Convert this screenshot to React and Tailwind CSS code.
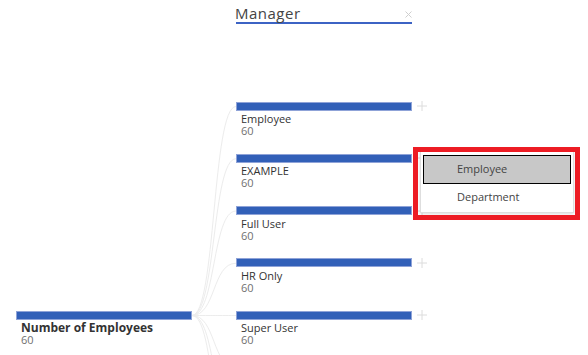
import React from "react";

const rows = [
  { label: "Employee" },
  { label: "EXAMPLE" },
  { label: "Full User" },
  { label: "HR Only" },
  { label: "Super User" },
];

const childYs = [102, 154.25, 206.5, 258.75, 311, 363.25, 415.5, 467.75];

function Bar() {
  return <div className="h-[9px] w-[176px] shrink-0 bg-[#3260b8] border border-[#8fa3d8]" />;
}

function Plus() {
  return (
    <svg width="10" height="10" viewBox="0 0 10 10" className="shrink-0">
      <line x1="0" y1="5" x2="10" y2="5" stroke="#dcdcdc" strokeWidth="1" />
      <line x1="5" y1="0" x2="5" y2="10" stroke="#dcdcdc" strokeWidth="1" />
    </svg>
  );
}

function Node({ label, bold }) {
  return (
    <div className="flex flex-col">
      <div className="flex items-center gap-[5px]">
        <Bar />
        {!bold && <Plus />}
      </div>
      <div className="mt-[2px] pl-[5px] leading-[12px]">
        <div className={bold ? "text-[12px] font-bold text-[#333]" : "text-[11px] text-[#333]"}>{label}</div>
        <div className="text-[11px] text-[#707070]">60</div>
      </div>
    </div>
  );
}

export default function App() {
  const sx = 192;
  const sy = 315.5;
  const ex = 236;
  return (
    <div
      className="relative w-[588px] h-[355px] overflow-hidden bg-white"
      style={{ fontFamily: '"Open Sans", "Noto Sans", sans-serif' }}
    >
      <svg className="absolute left-0 top-0" width="588" height="355">
        {childYs.map((y, i) => {
          const ty = y + 4.5;
          return (
            <path
              key={i}
              d={`M ${sx} ${sy} C ${sx + 24} ${sy}, ${ex - 24} ${ty}, ${ex} ${ty}`}
              fill="none"
              stroke="#ececec"
              strokeWidth="1"
            />
          );
        })}
      </svg>

      <div className="relative flex items-start pl-[16px]">
        {/* root column */}
        <div className="pt-[311px] w-[220px] shrink-0">
          <Node label="Number of Employees" bold />
        </div>

        {/* child column */}
        <div className="flex flex-col pt-[3px] -ml-[1px]">
          <div className="relative w-[177px]">
            <div className="h-[20px] text-[15px] leading-[20px] tracking-[0.5px] text-[#444]">Manager</div>
            <div className="h-[2px] bg-[#3c63c4] mt-[-1px] ml-[1px]" />
            <svg className="absolute left-[170px] top-[8px]" width="7" height="7" viewBox="0 0 7 7">
              <line x1="0.5" y1="0.5" x2="6.5" y2="6.5" stroke="#cfcfcf" strokeWidth="1" />
              <line x1="6.5" y1="0.5" x2="0.5" y2="6.5" stroke="#cfcfcf" strokeWidth="1" />
            </svg>
          </div>
          <div className="flex flex-col pt-[77px] pl-[1px]">
            {rows.map((r) => (
              <div key={r.label} className="h-[52.25px]">
                <Node label={r.label} />
              </div>
            ))}
          </div>
        </div>
      </div>

      {/* dropdown menu */}
      <div className="absolute left-[420px] top-[150px] w-[154px] h-[63px] bg-white border border-[#dedede] shadow-[0_1px_3px_rgba(0,0,0,0.15)] pt-[4px] px-[2px] text-[11px] text-[#444]">
        <div className="h-[29px] flex items-center pl-[33px] bg-[#c8c8c8] border border-black">Employee</div>
        <div className="h-[27px] flex items-center pl-[34px]">Department</div>
      </div>

      {/* red highlight */}
      <div className="absolute left-[413px] top-[147px] w-[167px] h-[73px] border-[5px] border-[#ed1c24]" />
    </div>
  );
}
